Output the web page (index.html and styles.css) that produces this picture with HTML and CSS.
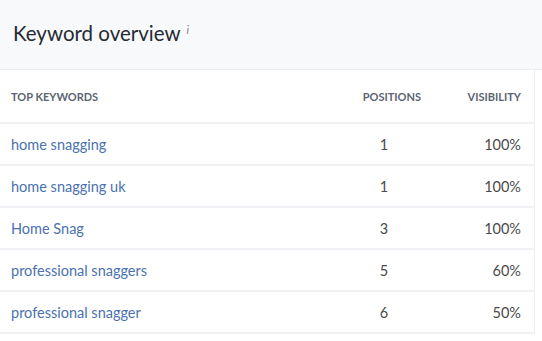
FILE: index.html
```html
<!DOCTYPE html>
<html>
<head>
<meta charset="utf-8">
<link rel="stylesheet" href="styles.css">
</head>
<body>
<div class="panel">
  <div class="panel-head">
    <h2 class="title">Keyword overview <span class="info">i</span></h2>
  </div>
  <div class="table">
    <div class="row head">
      <div class="c-kw">TOP KEYWORDS</div>
      <div class="c-pos">POSITIONS</div>
      <div class="c-vis">VISIBILITY</div>
    </div>
    <div class="row">
      <div class="c-kw"><a href="#">home snagging</a></div>
      <div class="c-pos">1</div>
      <div class="c-vis">100%</div>
    </div>
    <div class="row">
      <div class="c-kw"><a href="#">home snagging uk</a></div>
      <div class="c-pos">1</div>
      <div class="c-vis">100%</div>
    </div>
    <div class="row">
      <div class="c-kw"><a href="#">Home Snag</a></div>
      <div class="c-pos">3</div>
      <div class="c-vis">100%</div>
    </div>
    <div class="row">
      <div class="c-kw"><a href="#">professional snaggers</a></div>
      <div class="c-pos">5</div>
      <div class="c-vis">60%</div>
    </div>
    <div class="row">
      <div class="c-kw"><a href="#">professional snagger</a></div>
      <div class="c-pos">6</div>
      <div class="c-vis">50%</div>
    </div>
  </div>
</div>
</body>
</html>
```
FILE: styles.css
```css
html, body {
  margin: 0;
  padding: 0;
  background: #ffffff;
  font-family: Lato, "Open Sans", Arial, sans-serif;
}
.panel {
  width: 542px;
}
.panel-head {
  background: #f8f9fb;
  height: 70px;
  border-bottom: 1px solid #eceef2;
  display: flex;
  align-items: center;
  padding-left: 13px;
  box-sizing: border-box;
}
.title {
  margin: 0;
  font-weight: 400;
  font-size: 20.5px;
  color: #262b33;
  margin-top: -4px;
}
.info {
  font-style: italic;
  font-size: 11px;
  color: #7b8597;
  vertical-align: 7px;
  margin-left: 1px;
}
.table {
  width: 534px;
  border-right: 1px solid #eceef2;
}
.row {
  display: grid;
  grid-template-columns: 1fr 100px 100px;
  align-items: center;
  height: 42px;
  border-bottom: 2px solid #f1f2f5;
  box-sizing: border-box;
  font-size: 14.5px;
  color: #4a4a4a;
}
.row.head {
  height: 54px;
  font-size: 11px;
  font-weight: 700;
  color: #5c6473;
}
.c-kw {
  padding-left: 11px;
}
.c-pos {
  text-align: center;
}
.head .c-pos {
  text-align: right;
  padding-right: 13px;
}
.c-vis {
  text-align: right;
  padding-right: 13px;
}
a {
  color: #4a72b0;
  text-decoration: none;
}
```
